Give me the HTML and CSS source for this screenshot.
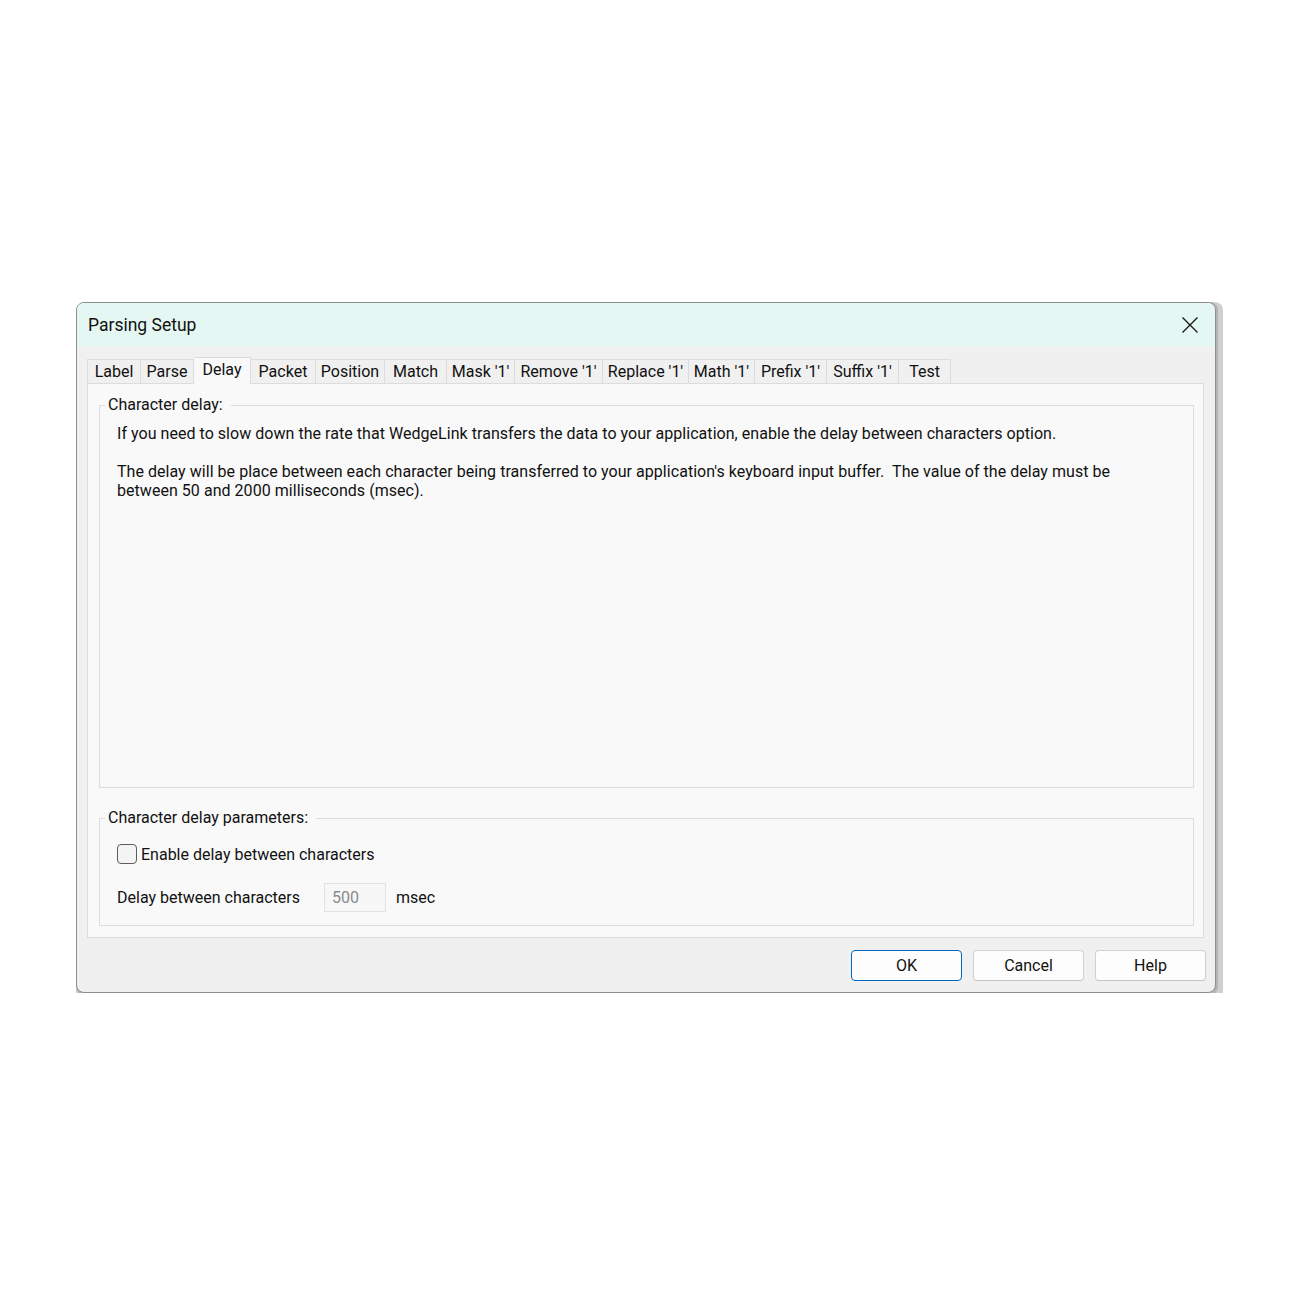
FILE: index.html
```html
<!DOCTYPE html>
<html>
<head>
<meta charset="utf-8">
<link rel="stylesheet" href="styles.css">
</head>
<body>
<div class="stage">
  <div class="dialog">
    <div class="titlebar">
      <span class="title">Parsing Setup</span>
      <svg class="close" width="18" height="18" viewBox="0 0 18 18"><path d="M1.5 1.5 L16.5 16.5 M16.5 1.5 L1.5 16.5" stroke="#1a1a1a" stroke-width="1.4" fill="none"/></svg>
    </div>
    <div class="content">
      <div class="tabs">
        <div class="tab">Label</div>
        <div class="tab">Parse</div>
        <div class="tab active">Delay</div>
        <div class="tab">Packet</div>
        <div class="tab">Position</div>
        <div class="tab">Match</div>
        <div class="tab">Mask '1'</div>
        <div class="tab">Remove '1'</div>
        <div class="tab">Replace '1'</div>
        <div class="tab">Math '1'</div>
        <div class="tab">Prefix '1'</div>
        <div class="tab">Suffix '1'</div>
        <div class="tab">Test</div>
      </div>
      <div class="panel">
        <fieldset class="group group-info">
          <legend>Character delay:</legend>
          <div class="group-body">
            <p class="para">If you need to slow down the rate that WedgeLink transfers the data to your application, enable the delay between characters option.</p>
            <p class="para">The delay will be place between each character being transferred to your application's keyboard input buffer.&nbsp; The value of the delay must be<br>between 50 and 2000 milliseconds (msec).</p>
          </div>
        </fieldset>
        <fieldset class="group group-params">
          <legend>Character delay parameters:</legend>
          <div class="group-body">
            <label class="check-row"><span class="checkbox"></span><span>Enable delay between characters</span></label>
            <div class="field-row">
              <span class="field-label">Delay between characters</span>
              <span class="input">500</span>
              <span class="unit">msec</span>
            </div>
          </div>
        </fieldset>
      </div>
      <div class="buttons">
        <button class="btn default">OK</button>
        <button class="btn">Cancel</button>
        <button class="btn">Help</button>
      </div>
    </div>
  </div>
</div>
</body>
</html>
```
FILE: styles.css
```css
html, body {
  margin: 0;
  padding: 0;
  background: #ffffff;
}
body {
  font-family: Roboto, "Liberation Sans", sans-serif;
  color: #111111;
  font-size: 16px;
}
.stage {
  padding: 302px 0 0 76px;
}
.dialog {
  width: 1138px;
  height: 689px;
  border: 1px solid #8e8e8e;
  border-radius: 8px;
  background: #f0f0f0;
  box-shadow:
    2px 2px 0 #b4b4b4,
    0 2px 0 #b4b4b4,
    2px 0 0 #b4b4b4,
    7px 7px 0 #d0d0d0,
    0 7px 0 #d0d0d0,
    7px 0 0 #d0d0d0;
  overflow: hidden;
  display: flex;
  flex-direction: column;
}
.titlebar {
  height: 44px;
  flex: none;
  background: #e5f7f3;
  display: flex;
  align-items: center;
  justify-content: space-between;
  padding: 0 16px 0 11px;
}
.title {
  font-size: 17.5px;
  color: #111;
}
.close {
  display: block;
}
.content {
  flex: 1;
  padding: 10px 11px 0 10px;
  display: flex;
  flex-direction: column;
}
.tabs {
  display: flex;
  align-items: flex-end;
  height: 26px;
  flex: none;
  position: relative;
  z-index: 1;
}
.tab {
  box-sizing: border-box;
  height: 24px;
  line-height: 23px;
  text-align: center;
  border: 1px solid #dcdcdc;
  border-bottom: none;
  border-left: none;
  background: #f0f0f0;
  font-size: 16px;
  color: #111;
}
.tab:nth-child(1) { width: 54px; border-left: 1px solid #dcdcdc; }
.tab:nth-child(2) { width: 53px; }
.tab:nth-child(3) { width: 57px; }
.tab:nth-child(4) { width: 65px; }
.tab:nth-child(5) { width: 69px; }
.tab:nth-child(6) { width: 62px; }
.tab:nth-child(7) { width: 68px; }
.tab:nth-child(8) { width: 88px; }
.tab:nth-child(9) { width: 86px; }
.tab:nth-child(10) { width: 66px; }
.tab:nth-child(11) { width: 72px; }
.tab:nth-child(12) { width: 72px; }
.tab:nth-child(13) { width: 52px; }
.tab.active {
  height: 27px;
  line-height: 24px;
  background: #f9f9f9;
  margin-bottom: -1px;
}
.panel {
  flex: none;
  box-sizing: border-box;
  height: 555px;
  border: 1px solid #dcdcdc;
  background: #f9f9f9;
  padding: 10px 9px 0 11px;
  display: flex;
  flex-direction: column;
  gap: 19px;
}
.group {
  margin: 0;
  border: 1px solid #dcdcdc;
  padding: 0;
  min-width: 0;
  box-sizing: border-box;
}
.group legend {
  padding: 0 8px 0 3px;
  margin-left: 5px;
  font-size: 16px;
  line-height: 22px;
  color: #111;
}
.group-body {
  padding: 0 16px 0 17px;
}
.group-info {
  height: 394px;
}
.group-info .group-body {
  padding-top: 8px;
}
.para {
  margin: 0 0 19px;
  line-height: 19px;
  font-size: 16px;
  letter-spacing: 0.04px;
}
.group-params {
  height: 119px;
}
.group-params .group-body {
  padding-top: 14px;
}
.check-row {
  display: flex;
  align-items: center;
  gap: 4px;
  height: 22px;
}
.checkbox {
  width: 20px;
  height: 20px;
  border: 1px solid #5c5c5c;
  border-radius: 4px;
  background: #f4f4f4;
  box-sizing: border-box;
}
.field-row {
  display: flex;
  align-items: center;
  margin-top: 18px;
}
.field-label {
  width: 207px;
}
.input {
  width: 62px;
  height: 29px;
  box-sizing: border-box;
  border: 1px solid #e2e2e2;
  background: #f7f7f7;
  color: #8a8a8a;
  line-height: 27px;
  padding-left: 7px;
}
.unit {
  margin-left: 10px;
}
.buttons {
  display: flex;
  justify-content: flex-end;
  gap: 11px;
  margin-top: 12px;
  margin-right: -2px;
}
.btn {
  width: 111px;
  height: 31px;
  border: 1px solid #d0d0d0;
  border-bottom-color: #c4c4c4;
  border-radius: 4px;
  background: #fdfdfd;
  font-family: Roboto, "Liberation Sans", sans-serif;
  font-size: 16px;
  color: #111;
  padding: 0;
}
.btn.default {
  border: 1px solid #0067c0;
}
```
